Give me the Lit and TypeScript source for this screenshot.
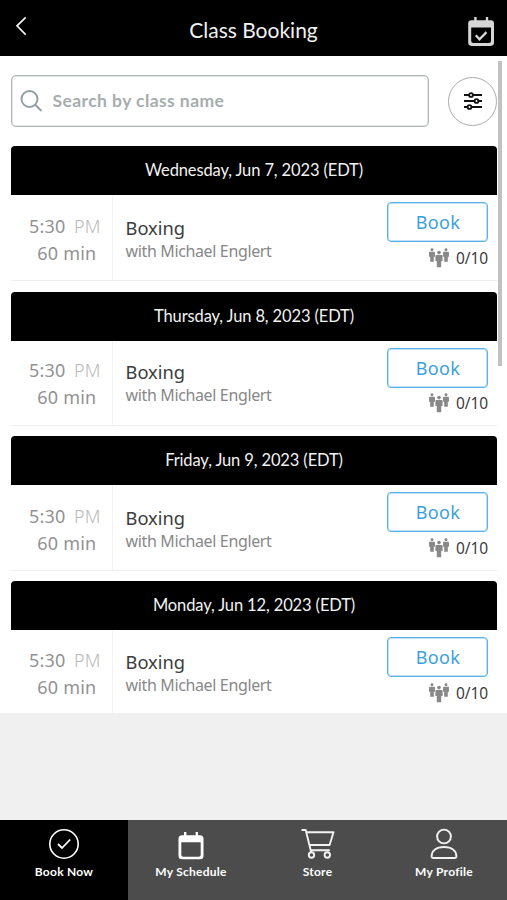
import { LitElement, html, css, svg } from "lit";
import { customElement, property } from "lit/decorators.js";
import { classMap } from "lit/directives/class-map.js";

const days = [
  { label: "Wednesday, Jun 7, 2023 (EDT)", cls: "d1" },
  { label: "Thursday, Jun 8, 2023 (EDT)", cls: "d2" },
  { label: "Friday, Jun 9, 2023 (EDT)", cls: "d3" },
  { label: "Monday, Jun 12, 2023 (EDT)", cls: "d4" },
];

const person = (x: number, y: number, s: number) => svg`
  <g transform="translate(${x} ${y}) scale(${s})">
    <circle cx="0" cy="1.8" r="1.8"></circle>
    <path d="M-2.6 4.200h5.200q1 0 1 1v5h-1.400V16.500h-4.400V10.200h-1.400V5.200q0-1 1-1z"></path>
  </g>`;

@customElement("class-card")
export class ClassCard extends LitElement {
  @property() day = "";

  static styles = css`
    :host { display: block; font-family: "Noto Sans", sans-serif; }
    .head {
      box-sizing: border-box; height: 49px; padding-bottom: 1px; border-radius: 4px 4px 0 0; background: #000; color: #f2f2f2;
      display: flex; align-items: center; justify-content: center;
      font: 400 16.5px/24px "Lato", sans-serif; letter-spacing: -0.12px; white-space: nowrap;
    }
    .row {
      height: calc(85px - var(--trim, 0px)); border-bottom: 1px solid #efefef;
      display: grid; grid-template-columns: 102px 1fr 111px;
    }
    .time {
      border-right: 1px solid #f4f4f4; text-align: right; color: #929292;
      font-size: 18px; line-height: 27px; padding-top: calc(18px - var(--lift, 0px)); white-space: nowrap;
    }
    .clock { padding-right: 11.5px; letter-spacing: 0.15px; }
    .pm { color: #b9b9b9; margin-left: 8.5px; font-weight: 300; }
    .length { padding-right: 15.5px; letter-spacing: 0.25px; }
    .info { padding: calc(20.5px - var(--lift, 0px)) 0 0 12.5px; white-space: nowrap; }
    .name { font-size: 18.3px; line-height: 24px; color: #3c3c3c; }
    .coach { font-size: 16px; line-height: 22px; color: #888; letter-spacing: -0.36px; }
    .side { padding: 7px 0 0 1px; }
    button {
      display: block; box-sizing: border-box; width: 101px; height: 40px; padding: 0 0 0 1px;
      border: 1px solid #5bb2e6; box-shadow: inset 0 0 0 1px #bfe0f6; border-radius: 4px;
      background: #fff; color: #3d9fe0;
      font: 400 18px/37px "Noto Sans", sans-serif; letter-spacing: 0.3px;
    }
    .spots {
      display: flex; align-items: center; justify-content: flex-end; width: 101px;
      height: calc(32px - 2 * var(--trim, 0px));
      gap: 7px; font-size: 15.5px; color: #3c3c3c; letter-spacing: -0.1px;
    }
  `;

  render() {
    return html`
      <div class="head">${this.day}</div>
      <div class="row">
        <div class="time">
          <div class="clock">5:30<span class="pm">PM</span></div>
          <div class="length">60 min</div>
        </div>
        <div class="info">
          <div class="name">Boxing</div>
          <div class="coach">with Michael Englert</div>
        </div>
        <div class="side">
          <button>Book</button>
          <div class="spots">
            <svg width="20" height="20" viewBox="0 0 20 20" fill="#888">
              ${person(3, 0.3, 0.82)}${person(17, 0.3, 0.82)}${person(10, 2.8, 1)}
            </svg>
            <span>0/10</span>
          </div>
        </div>
      </div>
    `;
  }
}

const circleCheck = html`<svg width="34" height="34" viewBox="0 0 34 34" fill="none" stroke="#fff" stroke-width="1.6">
  <circle cx="17" cy="17" r="14.2"></circle><path d="M11 17l4 4 8.2-8.5" stroke-width="1.8"></path></svg>`;
const calendar = html`<svg width="34" height="34" viewBox="0 0 34 34">
  <path fill="#fff" fill-rule="evenodd" d="M10 5h2.400v3.200h9.200V5H24v3.200h2q3.500 0 3.500 3.500v17q0 3.500-3.500 3.500H8q-3.500 0-3.500-3.500v-17q0-3.500 3.500-3.500h2zM7.300 15.200v12.500q0 2 2 2h15.400q2 0 2-2V15.200z"></path></svg>`;
const cart = html`<svg width="34" height="34" viewBox="0 0 34 34" fill="none" stroke="#f2f2f2" stroke-width="1.9" stroke-linejoin="round">
  <path d="M.5 3h4.200l5 20.200h19.100M5.500 5.200h27l-3.900 12.800H8.600"></path>
  <circle cx="10.500" cy="28" r="2.700"></circle><circle cx="26.300" cy="28" r="2.700"></circle><path d="M9.700 23.100l.5 2.400"></path></svg>`;
const profile = html`<svg width="34" height="34" viewBox="0 0 34 34" fill="none" stroke="#f2f2f2" stroke-width="1.9">
  <circle cx="17" cy="9.500" r="6.900"></circle>
  <path d="M4.600 29.500c0-6 5-9.500 12.400-9.500s12.400 3.500 12.400 9.500q0 1.500-1.500 1.500H6.100q-1.500 0-1.500-1.500z"></path></svg>`;

@customElement("app-root")
export class AppRoot extends LitElement {
  static styles = css`
    :host {
      display: flex; flex-direction: column; position: relative; width: 507px; height: 900px;
      overflow: hidden; background: #f0f0f0; font-family: "Lato", sans-serif;
    }
    .top {
      flex: none; height: 56px; background: #000; display: grid;
      grid-template-columns: 60px 1fr 60px; color: #f2f2f2;
    }
    .back { margin: 16px 0 0 14px; }
    .title { text-align: center; font-size: 21px; line-height: 59px; letter-spacing: 0; }
    .booked { margin: 15px 0 0 20px; }
    .content { flex: none; height: 657px; background: #fff; overflow: hidden; }
    .tools { display: flex; align-items: center; padding: 19px 10px 0 11px; justify-content: space-between; height: 52px; }
    .search {
      box-sizing: border-box; width: 418px; height: 52px; border: 1px solid #b0b5b5;
      box-shadow: inset 0 0 0 0.5px #c8cccc; border-radius: 5px;
      display: flex; align-items: center; gap: 9.5px; padding-left: 8px; color: #a7adae;
      font: 700 17.5px/24px "Lato", sans-serif; letter-spacing: 0.42px;
    }
    .filter {
      box-sizing: border-box; width: 49px; height: 49px; border: 1.500px solid #ababab; border-radius: 50%;
      display: grid; place-items: center;
    }
    .list { padding: 19px 10px 0 11px; }
    .d1 { height: 146px; }
    .d2 { height: 144px; --lift: 2px; --trim: 1px; }
    .d3 { height: 145px; }
    .d4 { --lift: 1px; }
    .thumb { position: absolute; left: 498px; top: 61px; width: 4px; height: 305px; background: #c1c1c1; }
    .tabs { height: 80.500px; margin-top: auto; display: grid; grid-template-columns: 128px 126px 127px 126px; background: #4c4c4c; }
    .tab {
      display: flex; flex-direction: column; align-items: center; padding-top: 7px; color: #fff;
      font: 700 12px/18px "Lato", sans-serif; letter-spacing: 0.26px; white-space: nowrap;
    }
    .tab.active { background: #000; }
    .tab svg { margin-bottom: 2px; }
  `;

  private tab(icon: unknown, label: string, active = false) {
    return html`<div class=${classMap({ tab: true, active })}>${icon}<span>${label}</span></div>`;
  }

  render() {
    return html`
      <div class="top">
        <svg class="back" width="14" height="20" viewBox="0 0 14 20" fill="none" stroke="#f2f2f2" stroke-width="1.7"><path d="M11.700 1.300L3 9.800l8.700 8.800"></path></svg>
        <div class="title">Class Booking</div>
        <svg class="booked" width="30" height="34" viewBox="0 0 30 34">
          <path fill="#d6d6d6" fill-rule="evenodd" d="M7.200 2h2.400v3.300h9.200V2h2.400v3.300h2.500q3.300 0 3.300 3.300v19q0 3.300-3.300 3.300H4.500q-3.300 0-3.300-3.300v-19q0-3.300 3.300-3.300h2.700zM4.200 12.500v13.500q0 2 2 2h15.800q2 0 2-2V12.500z"></path>
          <path d="M8.800 20.300l3.700 4 7-7.200" fill="none" stroke="#d6d6d6" stroke-width="2.300"></path>
        </svg>
      </div>
      <div class="content">
        <div class="tools">
          <div class="search">
            <svg width="23" height="24" viewBox="0 0 23 24" fill="none" stroke="#939fa2" stroke-width="2"><circle cx="9.500" cy="10" r="8"></circle><path d="M15.200 15.800l6.300 6.200"></path></svg>
            <span>Search by class name</span>
          </div>
          <div class="filter">
            <svg width="20" height="18" viewBox="0 0 20 18" fill="#fff" stroke="#111" stroke-width="1.900">
              <path d="M1 3h18M1 9h18M1 15h18"></path>
              <circle cx="8" cy="3" r="1.900"></circle><circle cx="13.500" cy="9" r="1.900"></circle><circle cx="6.500" cy="15" r="1.900"></circle>
            </svg>
          </div>
        </div>
        <div class="list">${days.map((d) => html`<class-card class=${d.cls} .day=${d.label}></class-card>`)}</div>
      </div>
      <div class="thumb"></div>
      <div class="tabs">
        ${this.tab(circleCheck, "Book Now", true)}${this.tab(calendar, "My Schedule")}
        ${this.tab(cart, "Store")}${this.tab(profile, "My Profile")}
      </div>
    `;
  }
}
